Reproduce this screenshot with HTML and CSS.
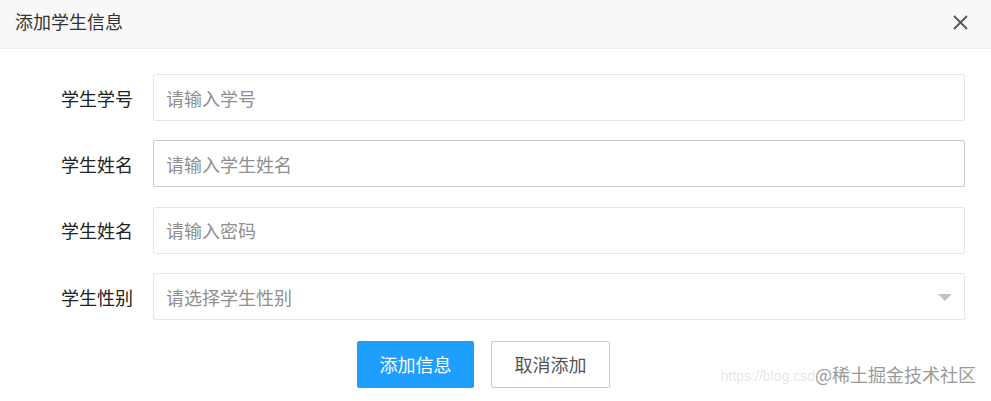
FILE: index.html
```html
<!DOCTYPE html>
<html lang="zh-CN">
<head>
<meta charset="utf-8">
<title>添加学生信息</title>
<link rel="stylesheet" href="styles.css">
</head>
<body>
<div class="dialog">
  <div class="dialog-header">
    <span class="dialog-title">添加学生信息</span>
    <span class="dialog-close" aria-label="关闭">
      <svg width="15" height="15" viewBox="0 0 15 15"><path d="M1 1 L14 14 M14 1 L1 14" stroke="#555" stroke-width="1.8" fill="none"/></svg>
    </span>
  </div>
  <form class="form">
    <div class="row">
      <label class="label">学生学号</label>
      <div class="field"><input class="input" type="text" placeholder="请输入学号"></div>
    </div>
    <div class="row">
      <label class="label">学生姓名</label>
      <div class="field"><input class="input input-hover" type="text" placeholder="请输入学生姓名"></div>
    </div>
    <div class="row">
      <label class="label">学生姓名</label>
      <div class="field"><input class="input" type="password" placeholder="请输入密码"></div>
    </div>
    <div class="row">
      <label class="label">学生性别</label>
      <div class="field">
        <div class="select">
          <span class="select-text">请选择学生性别</span>
          <span class="caret"></span>
        </div>
      </div>
    </div>
    <div class="actions">
      <button type="button" class="btn btn-primary">添加信息</button>
      <button type="button" class="btn btn-default">取消添加</button>
    </div>
  </form>
  <div class="watermark"><span class="wm-url">https://blog.csd</span><span class="wm-main">@稀土掘金技术社区</span></div>
</div>
</body>
</html>
```
FILE: styles.css
```css
* { box-sizing: border-box; }
html, body {
  margin: 0;
  padding: 0;
  background: #fff;
  font-family: "Noto Sans CJK SC", "Noto Sans", sans-serif;
}
.dialog {
  position: relative;
  width: 991px;
  height: 401px;
  background: #fff;
  overflow: hidden;
}
.dialog-header {
  height: 49px;
  background: #f8f8f8;
  border-bottom: 1px solid #eeeeee;
  display: flex;
  align-items: flex-start;
  justify-content: space-between;
  padding: 8px 23px 0 15px;
}
.dialog-title {
  font-size: 18px;
  line-height: 26px;
  color: #333;
}
.dialog-close {
  display: flex;
  margin-top: 7px;
}
.form {
  display: flex;
  flex-direction: column;
  gap: 19.4px;
  padding: 25px 26px 0 0;
  margin: 0;
}
.row {
  display: flex;
  align-items: center;
  gap: 20px;
  height: 47px;
}
.label {
  width: 133px;
  text-align: right;
  font-size: 18px;
  color: #222;
  line-height: 26px;
}
.field {
  flex: 1;
  height: 47px;
}
.input, .select {
  width: 100%;
  height: 47px;
  border: 1px solid #e6e6e6;
  border-radius: 2px;
  background: #fff;
  padding: 0 12px;
  font-family: inherit;
  font-size: 18px;
  color: #333;
  outline: none;
}
.input-hover { border-color: #c9c9c9; }
.input::placeholder { color: #8f8f8f; }
.select {
  display: flex;
  align-items: center;
  justify-content: space-between;
  padding-right: 12px;
}
.select-text { color: #8f8f8f; }
.caret {
  width: 0;
  height: 0;
  border-left: 7px solid transparent;
  border-right: 7px solid transparent;
  border-top: 7px solid #c2c2c2;
  margin-top: 2px;
}
.actions {
  display: flex;
  gap: 17px;
  padding-left: 357px;
  margin-top: 1px;
}
.btn {
  height: 47px;
  border-radius: 2px;
  font-family: inherit;
  font-size: 18px;
  padding: 0;
  cursor: pointer;
}
.btn-primary {
  width: 117px;
  background: #1e9fff;
  border: 1px solid #1e9fff;
  color: #fff;
}
.btn-default {
  width: 119px;
  background: #fff;
  border: 1px solid #c9c9c9;
  color: #555;
}
.watermark {
  position: absolute;
  right: 15px;
  bottom: 14px;
  display: flex;
  align-items: center;
}
.wm-url {
  font-family: "Liberation Sans", sans-serif;
  font-size: 14px;
  color: rgba(0,0,0,0.12);
  white-space: nowrap;
  margin-top: 4px;
}
.wm-main {
  font-size: 18px;
  color: #9a9a9a;
}
```
